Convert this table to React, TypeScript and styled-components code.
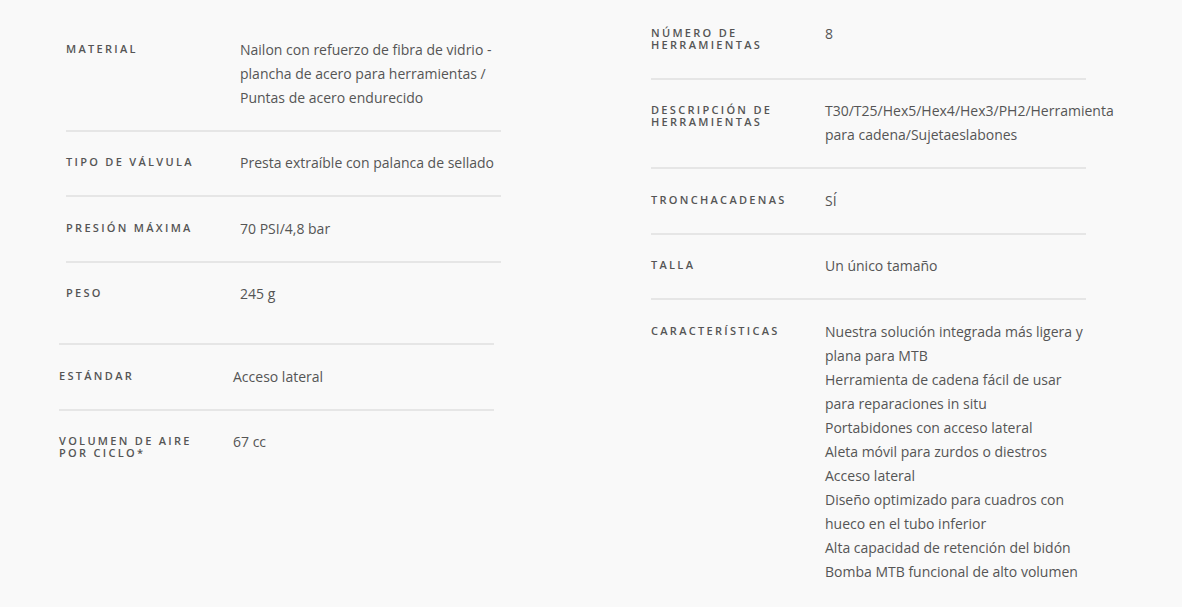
import React from 'react';
import styled, { createGlobalStyle } from 'styled-components';

const GlobalStyle = createGlobalStyle`
    html, body {
        margin: 0;
        padding: 0;
        background: #f9f9f9;
    }
`;

const Page = styled.div`
    display: flex;
    align-items: flex-start;
    gap: 150px;
    padding: 2px 0 0 59px;
    width: 1182px;
    height: 607px;
    box-sizing: border-box;
    background: #f9f9f9;
    overflow: hidden;
`;

const Column = styled.div<{ $offset?: number }>`
    display: flex;
    flex-direction: column;
    width: 442px;
    margin-top: ${p => p.$offset || 0}px;
`;

const SpecTable = styled.div<{ $indent?: number; $topRule?: boolean }>`
    display: flex;
    flex-direction: column;
    width: 435px;
    margin-left: ${p => p.$indent || 0}px;
    margin-top: ${p => (p.$topRule ? 17 : 0)}px;
    border-top: ${p => (p.$topRule ? '2px solid #e6e6e6' : 'none')};
`;

const Row = styled.div`
    display: grid;
    grid-template-columns: 174px 1fr;
    padding: 19.5px 0 20px;
    border-bottom: 2px solid #e6e6e6;

    &:last-child {
        border-bottom: none;
    }
`;

const Label = styled.div`
    padding: 5px 20px 7px 0;
    font-family: "Open Sans", "Liberation Sans", sans-serif;
    font-weight: 600;
    font-size: 11px;
    line-height: 12px;
    letter-spacing: 2.3px;
    text-transform: uppercase;
    color: #555;
`;

const Value = styled.div`
    font-family: "Open Sans", "Liberation Sans", sans-serif;
    font-size: 14px;
    line-height: 24px;
    color: #555;
`;

const NoWrap = styled.span`
    white-space: nowrap;
`;

interface SpecProps {
    label: string;
    children: React.ReactNode;
}

function Spec(props: SpecProps) {
    return (
        <Row>
            <Label>{ props.label }</Label>
            <Value>{ props.children }</Value>
        </Row>
    );
}

const features = [
    'Nuestra solución integrada más ligera y plana para MTB',
    'Herramienta de cadena fácil de usar para reparaciones in situ',
    'Portabidones con acceso lateral',
    'Aleta móvil para zurdos o diestros',
    'Acceso lateral',
    'Diseño optimizado para cuadros con hueco en el tubo inferior',
    'Alta capacidad de retención del bidón',
    'Bomba MTB funcional de alto volumen',
];

export default function App() {
    return (
        <>
            <GlobalStyle />
            <Page>
                <Column $offset={16}>
                    <SpecTable $indent={7}>
                        <Spec label="Material">
                            Nailon con refuerzo de fibra de vidrio - plancha de acero para herramientas / Puntas de acero endurecido
                        </Spec>
                        <Spec label="Tipo de válvula">Presta extraíble con palanca de sellado</Spec>
                        <Spec label="Presión máxima">70 PSI/4,8 bar</Spec>
                        <Spec label="Peso">245 g</Spec>
                    </SpecTable>
                    <SpecTable $topRule>
                        <Spec label="Estándar">Acceso lateral</Spec>
                        <Spec label="Volumen de aire por ciclo*">67 cc</Spec>
                    </SpecTable>
                </Column>
                <Column>
                    <SpecTable>
                        <Spec label="Número de herramientas">8</Spec>
                        <Spec label="Descripción de herramientas">
                            <NoWrap>T30/T25/Hex5/Hex4/Hex3/PH2/Herramienta</NoWrap> para cadena/Sujetaeslabones
                        </Spec>
                        <Spec label="Tronchacadenas">SÍ</Spec>
                        <Spec label="Talla">Un único tamaño</Spec>
                        <Spec label="Características">
                            { features.map(f => <div key={ f }>{ f }</div>) }
                        </Spec>
                    </SpecTable>
                </Column>
            </Page>
        </>
    );
}
